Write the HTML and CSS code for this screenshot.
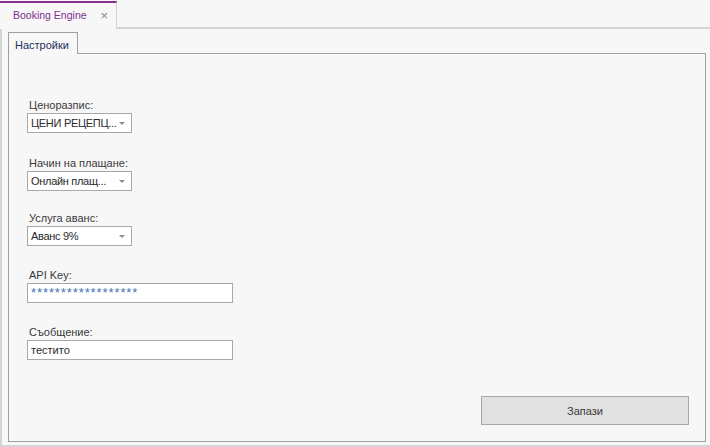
FILE: index.html
```html
<!DOCTYPE html>
<html lang="bg">
<head>
<meta charset="utf-8">
<title>Booking Engine</title>
<link rel="stylesheet" href="styles.css">
</head>
<body>
<div class="app">
  <div class="doc-tabs">
    <div class="doc-tab">
      <span class="doc-tab-title">Booking Engine</span>
      <span class="doc-tab-close">×</span>
    </div>
    <div class="doc-tabs-rest"></div>
  </div>
  <div class="frame">
    <div class="page-tabs">
      <div class="page-tab">Настройки</div>
    </div>
    <div class="panel">
      <div class="field field-price">
        <div class="label">Ценоразпис:</div>
        <div class="combo"><span class="combo-text">ЦЕНИ РЕЦЕПЦ...</span><span class="combo-arrow"></span></div>
      </div>
      <div class="field field-payment">
        <div class="label">Начин на плащане:</div>
        <div class="combo"><span class="combo-text">Онлайн плащ...</span><span class="combo-arrow"></span></div>
      </div>
      <div class="field">
        <div class="label">Услуга аванс:</div>
        <div class="combo"><span class="combo-text">Аванс 9%</span><span class="combo-arrow"></span></div>
      </div>
      <div class="field">
        <div class="label">API Key:</div>
        <div class="textbox password">******************</div>
      </div>
      <div class="field">
        <div class="label">Съобщение:</div>
        <div class="textbox">тестито</div>
      </div>
      <div class="actions">
        <button class="btn">Запази</button>
      </div>
    </div>
  </div>
</div>
</body>
</html>
```
FILE: styles.css
```css
html, body {
  margin: 0;
  padding: 0;
  background: #f7f7f7;
}
body {
  font-family: "Liberation Sans", Arial, sans-serif;
  font-size: 11px;
  color: #3a3a3a;
}
.app {
  width: 710px;
  height: 447px;
  display: flex;
  flex-direction: column;
}
.doc-tabs {
  display: flex;
  height: 29px;
  flex: none;
}
.doc-tab {
  width: 117px;
  flex: none;
  margin-top: 1px;
  border-top: 2px solid #8a2d92;
  border-right: 1px solid #d4d4d4;
  box-sizing: border-box;
  height: 28px;
  display: flex;
  align-items: center;
  padding-left: 13px;
  padding-bottom: 2px;
  background: #f7f7f7;
  white-space: nowrap;
}
.doc-tab-title {
  color: #7d2f8e;
  font-size: 10.5px;
}
.doc-tab-close {
  color: #8a8a8a;
  font-size: 13px;
  margin-left: 14px;
  line-height: 1;
}
.doc-tabs-rest {
  flex: 1;
  border-bottom: 2px solid #d4d4d4;
}
.frame {
  flex: 1;
  display: flex;
  flex-direction: column;
  border-left: 2px solid #d4d4d4;
  border-bottom: 2px solid #d4d4d4;
  padding: 3px 4px 3px 6px;
  min-height: 0;
}
.page-tabs {
  display: flex;
  flex: none;
}
.page-tab {
  position: relative;
  z-index: 1;
  width: 70px;
  height: 22px;
  box-sizing: border-box;
  border: 1px solid #a0a0a0;
  border-bottom: none;
  background: #f7f7f7;
  margin-bottom: -1px;
  color: #26305a;
  padding: 5px 0 0 6px;
  line-height: 14px;
  white-space: nowrap;
}
.panel {
  flex: 1;
  display: flex;
  flex-direction: column;
  border: 1px solid #a0a0a0;
  padding: 43px 16px 16px 18px;
  min-height: 0;
}
.field {
  display: flex;
  flex-direction: column;
  align-items: flex-start;
  margin-bottom: 21px;
}
.field-price {
  margin-bottom: 22px;
}
.field-payment {
  margin-bottom: 19px;
}
.label {
  line-height: 16px;
  height: 16px;
  padding-left: 2px;
  white-space: nowrap;
}
.combo {
  width: 105px;
  height: 20px;
  box-sizing: border-box;
  border: 1px solid #a8a8a8;
  background: #ffffff;
  display: flex;
  align-items: center;
  padding-left: 3px;
  padding-right: 6px;
  color: #2a2a2a;
}
.combo-text {
  flex: 1;
  white-space: nowrap;
  letter-spacing: -0.3px;
}
.combo-arrow {
  flex: none;
  width: 0;
  height: 0;
  border-left: 3px solid transparent;
  border-right: 3px solid transparent;
  border-top: 3px solid #8c8c8c;
  margin-top: 1px;
}
.textbox {
  width: 206px;
  height: 20px;
  box-sizing: border-box;
  border: 1px solid #a8a8a8;
  background: #ffffff;
  padding-left: 3px;
  line-height: 18px;
  color: #2a2a2a;
  white-space: nowrap;
}
.textbox.password {
  color: #4672b4;
  font-size: 13px;
  letter-spacing: 0.9px;
}
.actions {
  margin-top: auto;
  display: flex;
  justify-content: flex-end;
}
.btn {
  width: 208px;
  height: 29px;
  box-sizing: border-box;
  border: 1px solid #a8a8a8;
  background: #e1e1e1;
  font-family: inherit;
  font-size: 11px;
  color: #3a3a3a;
  padding: 0;
}
```
